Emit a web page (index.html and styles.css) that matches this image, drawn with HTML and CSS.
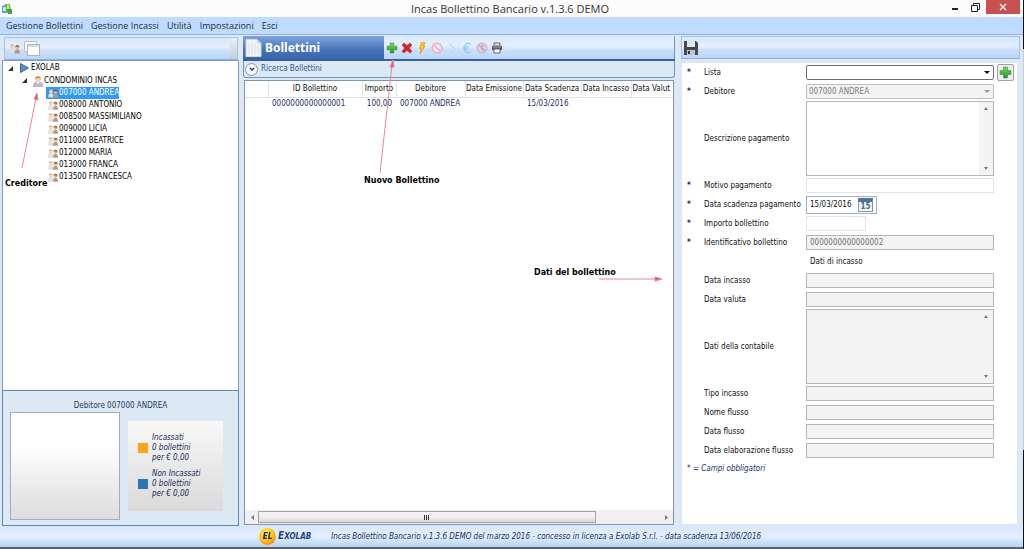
FILE: index.html
```html
<!DOCTYPE html>
<html lang="it">
<head>
<meta charset="utf-8">
<title>Incas Bollettino Bancario v.1.3.6 DEMO</title>
<link rel="stylesheet" href="styles.css">
</head>
<body>
<svg class="defs" width="0" height="0" aria-hidden="true">
  <defs>
    <linearGradient id="green" x1="0" y1="0" x2="0" y2="1"><stop offset="0" stop-color="#7ddb5c"/><stop offset="1" stop-color="#23922a"/></linearGradient>
    <symbol id="plus" viewBox="0 0 12 12"><path d="M4.2 1h3.6v3.2H11v3.6H7.800V11H4.200V7.800H1V4.200h3.200z" fill="url(#green)" stroke="#3c8f42" stroke-width=".6"/></symbol>
    <symbol id="people" viewBox="0 0 12 12"><path d="M1 10c0-3 1-4 2.800-4S6.500 7 6.500 10z" fill="#dfe6ee" stroke="#d3c6bb" stroke-width=".5"/><circle cx="3.700" cy="4" r="2" fill="#f6d5b6"/><path d="M1.600 3.600c0-3 4.200-3 4.300 0-1-1-3-1-4.300 0z" fill="#deb296"/><path d="M6 10.500c0-3 1-4 2.800-4s2.700 1 2.700 4z" fill="#b09a86"/><circle cx="8.800" cy="4.600" r="1.900" fill="#e9b68b"/><path d="M6.700 4.500c0-3.500 4.300-3.500 4.300 0-1-1.300-3-1.300-4.300 0z" fill="#7a5b48"/></symbol>
    <symbol id="person" viewBox="0 0 12 13"><path d="M.8 12.500c0-3.500 1.700-5 5.200-5s5.200 1.500 5.200 5z" fill="#c3b4d8" stroke="#9a82a8" stroke-width=".5"/><path d="M4.500 7.500 6 10l1.500-2.500z" fill="#fff"/><circle cx="6" cy="4.500" r="2.900" fill="#f8cf9d"/><path d="M2.800 5C2 0 10 0 9.200 5 8 3 5 2.600 2.800 5z" fill="#d18a32"/></symbol>
    <symbol id="tri" viewBox="0 0 5 5"><path d="M5 0v5H0z" fill="#333"/></symbol>
  </defs>
</svg>
<div class="window">
  <header class="titlebar">
    <svg class="app-icon" viewBox="0 0 12 12"><path d="M1 3 6 1v9L1 10z" fill="#5f9fc6"/><path d="M2 4h3v4H2z" fill="#c6e6f2"/><path d="M4 1h5l1 8-4 1z" fill="#73bf35"/><path d="M6 6h5v5H7z" fill="#4aa04a"/><path d="M6 2h2v4H6z" fill="#c4ef7c"/></svg>
    <h1 class="title">Incas Bollettino Bancario v.1.3.6 DEMO</h1>
    <div class="controls">
      <button type="button" aria-label="Riduci"><svg width="8" height="8"><path d="M1 5h6v2H1z" fill="#222"/></svg></button>
      <button type="button" aria-label="Ripristina"><svg width="9" height="9"><path d="M2.500 2.500v-2h6v6h-2M.5 2.500h6v6h-6z" fill="none" stroke="#222"/></svg></button>
      <button type="button" class="close" aria-label="Chiudi"><svg width="8" height="8"><path d="m1 1 6 6m0-6L1 7" stroke="#fff" stroke-width="1.300"/></svg></button>
    </div>
  </header>
  <nav class="menu">
    <button type="button">Gestione Bollettini</button>
    <button type="button">Gestione Incassi</button>
    <button type="button">Utilità</button>
    <button type="button">Impostazioni</button>
    <button type="button">Esci</button>
  </nav>
  <main class="workspace">
    <section class="left">
      <div class="toolbar">
        <button type="button" aria-label="Debitori"><svg width="13" height="12"><use href="#people"/></svg></button>
        <button type="button" aria-label="Finestre"><svg width="16" height="15" viewBox="0 0 16 15"><path d="M.5.500h12v10H.500z" fill="#fff" stroke="#b9c2cc"/><path d="M3.500 3.500h12v11h-12z" fill="#fff" stroke="#a9b4c0"/><path d="M4 4h11v2H4z" fill="#d6dde5"/></svg></button>
        <span class="grip"></span>
      </div>
      <div class="tree">
        <ul>
          <li><span class="node root"><svg width="5" height="5"><use href="#tri"/></svg><svg class="flag" width="9" height="10"><path d="M.5.500 8.500 5 .5 9.500z" fill="#5a8cc8" stroke="#3b6aa5"/></svg>EXOLAB</span></li>
          <li><span class="node group"><svg width="5" height="5"><use href="#tri"/></svg><svg class="head" width="12" height="12"><use href="#person"/></svg>CONDOMINIO INCAS</span>
            <ul class="leaves">
              <li><a href="#" class="node selected"><svg width="12" height="11"><use href="#people"/></svg>007000 ANDREA</a></li>
              <li><a href="#" class="node"><svg width="12" height="11"><use href="#people"/></svg>008000 ANTONIO</a></li>
              <li><a href="#" class="node"><svg width="12" height="11"><use href="#people"/></svg>008500 MASSIMILIANO</a></li>
              <li><a href="#" class="node"><svg width="12" height="11"><use href="#people"/></svg>009000 LICIA</a></li>
              <li><a href="#" class="node"><svg width="12" height="11"><use href="#people"/></svg>011000 BEATRICE</a></li>
              <li><a href="#" class="node"><svg width="12" height="11"><use href="#people"/></svg>012000 MARIA</a></li>
              <li><a href="#" class="node"><svg width="12" height="11"><use href="#people"/></svg>013000 FRANCA</a></li>
              <li><a href="#" class="node"><svg width="12" height="11"><use href="#people"/></svg>013500 FRANCESCA</a></li>
            </ul>
          </li>
        </ul>
      </div>
      <div class="debtor">
        <h2>Debitore 007000 ANDREA</h2>
        <div class="debtor-body">
          <div class="chart"></div>
          <div class="legend">
            <div class="entry"><span class="swatch orange"></span><p>Incassati<br>0 bollettini<br>per € 0,00</p></div>
            <div class="entry"><span class="swatch blue"></span><p>Non Incassati<br>0 bollettini<br>per € 0,00</p></div>
          </div>
        </div>
      </div>
    </section>

    <section class="center">
      <div class="list-head">
        <div class="list-title">
          <svg width="17" height="18" viewBox="0 0 17 18"><path d="M1 .5h11l4 4V17.500H1z" fill="#f3f4f6" stroke="#d3d8df"/><path d="M12 .5v4h4z" fill="#cdd5df"/><path d="M4 4v11M7 4v11M10 5v10M13 6v9" stroke="#d9dce1"/></svg>
          <h2>Bollettini</h2>
        </div>
        <div class="actions">
          <button type="button" aria-label="Nuovo"><svg width="12" height="12"><use href="#plus"/></svg></button>
          <button type="button" aria-label="Elimina"><svg width="12" height="12" viewBox="0 0 12 12"><path d="m1 3 2-2 3 2.500L9 1l2 2-2.500 3L11 9.500 9 11 6 8.500 3 11 1 9.500 3.500 6z" fill="#d6242b" stroke="#b9343a" stroke-width=".5"/></svg></button>
          <button type="button" aria-label="Genera"><svg width="12" height="12" viewBox="0 0 12 12"><path d="M5.500 0H9L7.500 4H9l-5 8 1.200-5.500H3.500z" fill="#f7c52c" stroke="#c98d1a" stroke-width=".6"/></svg></button>
          <button type="button" aria-label="Annulla" disabled><svg width="12" height="12" viewBox="0 0 12 12"><circle cx="6" cy="6" r="4.800" fill="#f3e6ef" stroke="#e6b3c2" stroke-width="1.500"/><path d="m3 3 6 6" stroke="#e6b3c2" stroke-width="1.500"/></svg></button>
          <button type="button" aria-label="Invia" disabled><svg width="12" height="12" viewBox="0 0 12 12"><path d="m3 2 6 4.500L3 11" fill="none" stroke="#c5d6ec" stroke-width="1.500"/></svg></button>
          <button type="button" aria-label="Incassa" disabled><svg width="12" height="12" viewBox="0 0 12 12"><path d="M9.500 2.500C6-.5 3.500 3 3.500 6s2.500 6.500 6 3.500M2 5h5.500M2 7h5" fill="none" stroke="#9bcdf0" stroke-width="1.500"/></svg></button>
          <button type="button" aria-label="Storna incasso" disabled><svg width="12" height="12" viewBox="0 0 12 12"><circle cx="6" cy="6" r="4.800" fill="#d9d2e8" stroke="#d9b6cd" stroke-width="1.500"/><path d="M8 4C5 2 4 8 8 8M3 3l6 6" fill="none" stroke="#bfa6c8" stroke-width="1.200"/></svg></button>
          <button type="button" aria-label="Stampa"><svg width="12" height="12" viewBox="0 0 12 12"><path d="M3 1h6v3H3z" fill="#e8e8e8" stroke="#666"/><path d="M1 4h10v4H1z" fill="#5a5a5a"/><path d="M3 7h6v4H3z" fill="#fff" stroke="#666"/><path d="M2 5h8" stroke="#aaa"/></svg></button>
        </div>
      </div>
      <div class="search">
        <button type="button"><span class="round"><svg width="6" height="5"><path d="m1 1 2 2 2-2" fill="none" stroke="#333" stroke-width="1.300"/></svg></span>Ricerca Bollettini</button>
      </div>
      <div class="grid-panel">
        <div class="grid-clip">
          <table>
            <colgroup><col class="c-head"><col class="c-id"><col class="c-amount"><col class="c-debtor"><col class="c-date"><col class="c-date"><col class="c-paid"><col class="c-value"></colgroup>
            <thead><tr><th></th><th>ID Bollettino</th><th>Importo</th><th>Debitore</th><th>Data Emissione</th><th>Data Scadenza</th><th>Data Incasso</th><th class="cut">Data Valut</th></tr></thead>
            <tbody><tr><td></td><td>0000000000000001</td><td class="num">100,00</td><td>007000 ANDREA</td><td></td><td>15/03/2016</td><td></td><td></td></tr></tbody>
          </table>
        </div>
        <div class="hscroll">
          <button type="button" aria-label="Scorri a sinistra"><svg width="4" height="5"><path d="M4 0v5L1 2.500z" fill="#777"/></svg></button>
          <div class="track"><div class="thumb"><svg width="6" height="5"><path d="M.5 0v5m2-5v5m2-5v5" stroke="#333"/></svg></div></div>
          <button type="button" aria-label="Scorri a destra"><svg width="4" height="5"><path d="M0 0v5l3-2.500z" fill="#777"/></svg></button>
        </div>
      </div>
    </section>

    <section class="right">
      <div class="toolbar save">
        <button type="button" aria-label="Salva"><svg width="14" height="14" viewBox="0 0 14 14"><path d="M0 0h12l2 2v12H0z" fill="#454a52"/><path d="M3 0h8v6H3z" fill="#dfe6ee"/><path d="M3 9h8v5H3z" fill="#bfc5cc"/><path d="M4 10h2v3H4z" fill="#333"/></svg></button>
      </div>
      <form class="form">
        <div class="row"><span class="req">*</span><label for="lista">Lista</label><span class="pick"><select id="lista"><option></option></select></span><button type="button" class="add" aria-label="Aggiungi lista"><svg width="13" height="13"><use href="#plus"/></svg></button></div>
        <div class="row"><span class="req">*</span><label for="deb">Debitore</label><span class="pick off"><select id="deb" disabled><option>007000 ANDREA</option></select></span></div>
        <div class="row tall"><span></span><label for="descr">Descrizione pagamento</label><div class="area"><textarea id="descr"></textarea><div class="vscroll"><i class="up"></i><i class="down"></i></div></div></div>
        <div class="row"><span class="req">*</span><label for="motivo">Motivo pagamento</label><input type="text" id="motivo" class="light"></div>
        <div class="row"><span class="req">*</span><label for="scad">Data scadenza pagamento</label><div class="date"><input type="text" id="scad" value="15/03/2016"><button type="button" aria-label="Calendario">15</button></div></div>
        <div class="row"><span class="req">*</span><label for="imp">Importo bollettino</label><input type="text" id="imp" class="light short"></div>
        <div class="row"><span class="req">*</span><label for="ident">Identificativo bollettino</label><input type="text" id="ident" value="0000000000000002" disabled></div>
        <div class="row"><h3>Dati di incasso</h3></div>
        <div class="row"><span></span><label for="dinc">Data incasso</label><input type="text" id="dinc" disabled></div>
        <div class="row"><span></span><label for="dval">Data valuta</label><input type="text" id="dval" disabled></div>
        <div class="row tall"><span></span><label for="cont">Dati della contabile</label><div class="area off"><textarea id="cont" disabled></textarea><div class="vscroll"><i class="up"></i><i class="down"></i></div></div></div>
        <div class="row"><span></span><label for="tipo">Tipo incasso</label><input type="text" id="tipo" disabled></div>
        <div class="row"><span></span><label for="nome">Nome flusso</label><input type="text" id="nome" disabled></div>
        <div class="row"><span></span><label for="dflu">Data flusso</label><input type="text" id="dflu" disabled></div>
        <div class="row"><span></span><label for="dela">Data elaborazione flusso</label><input type="text" id="dela" disabled></div>
        <p class="note">* = Campi obbligatori</p>
      </form>
    </section>
  </main>
  <footer class="status">
    <div class="brand"><span class="ball">EL</span><span class="brand-name">E<small>XOLAB</small></span></div>
    <p>Incas Bollettino Bancario v.1.3.6 DEMO del marzo 2016 - concesso in licenza a Exolab S.r.l. - data scadenza 13/06/2016</p>
  </footer>

  <div class="notes">
    <svg width="100%" height="100%">
      <g fill="#e0566a" stroke="#e58a96">
        <path d="M22 168 36 98"/><path d="m37 93 1 7-4-1z"/>
        <path d="m380 173 12-108"/><path d="m393 60 1 7h-4z"/>
        <path d="M599 279h58"/><path d="m662 279-7-2v4z"/>
      </g>
    </svg>
    <span class="tag creditor">Creditore</span>
    <span class="tag new-slip">Nuovo Bollettino</span>
    <span class="tag slip-data">Dati del bollettino</span>
  </div>
</div>
</body>
</html>
```
FILE: styles.css
```css
* { box-sizing: border-box; }
body {
  margin: 0;
  padding-right: 1px;
  background: linear-gradient(#111 9%, #c3ccd8 9%, #c3ccd8 82%, #111 82%);
  font: 8px/12px "DejaVu Sans Condensed", "Noto Sans", sans-serif;
  color: #111;
}
h1, h2, h3, p, ul { margin: 0; padding: 0; font-size: inherit; font-weight: normal; }
ul { list-style: none; }
button, input, select, textarea { font: inherit; color: inherit; margin: 0; padding: 0; }
button { border: 0; background: none; display: flex; align-items: center; justify-content: center; }
svg { display: block; flex: none; }
.defs { position: absolute; }

.window {
  position: relative;
  min-height: 100vh;
  display: flex;
  flex-direction: column;
  background: #dde8f5;
  border-bottom: 2px solid #5d5f66;
}

.titlebar {
  display: grid;
  grid-template-columns: 1fr auto 1fr;
  height: 17px;
  padding-right: 3px;
  background: #fcfcfc;
}
.app-icon { width: 12px; height: 12px; margin: 3px 0 0 1px; }
.title { font: 11px/17px "Open Sans", "Noto Sans", sans-serif; color: #333; }
.controls { display: flex; justify-content: flex-end; align-items: flex-start; }
.controls button { width: 20px; height: 14px; }
.controls .close { width: 34px; margin-left: 1px; background: #c75050; }

.menu {
  display: flex;
  gap: 8px;
  height: 18px;
  padding: 0 6px;
  background: #bfdbff;
  border-bottom: 1px solid #8db2e3;
}
.menu button { font: 9px/17px "Open Sans", "Noto Sans", sans-serif; color: #1c2c44; }

.workspace {
  flex: 1;
  display: grid;
  grid-template-columns: 237fr 432fr 341fr;
  gap: 4px;
  padding: 1px 3px 0 2px;
}
.left, .center, .right { display: flex; flex-direction: column; min-width: 0; }
.right { padding-left: 2px; }

.toolbar {
  display: flex;
  align-items: center;
  gap: 3px;
  height: 23px;
  padding-left: 3px;
  background: linear-gradient(#d6e7fb, #e3effd 45%, #cadffa 60%, #bdd7f8);
  border: 1px solid #a5c3e8;
  border-bottom-color: #8bb0dc;
}
.left .toolbar { margin: 1px 1px 0 2px; }
.grip { align-self: stretch; width: 7px; margin-left: auto; background: linear-gradient(#e9eef5, #c4cdd9); }

.tree {
  flex: 1;
  padding: 1px 0 0 5px;
  background: #fff;
  border: 1px solid #7d9cc0;
  border-bottom: 0;
}
.node { display: inline-flex; align-items: center; height: 12px; color: #000; text-decoration: none; white-space: nowrap; }
.root .flag { margin: 0 2px 0 7px; }
.group { padding-left: 14px; }
.group .head { margin: 0 0 0 5px; }
.leaves { padding-left: 38px; }
.leaves li { display: flex; height: 12px; }
.leaves .node { padding-left: 1px; }
.leaves .selected { background: #3399f5; color: #fff; }

.debtor {
  height: 136px;
  padding: 8px 15px 8px 7px;
  background: #dde8f5;
  border: 1px solid #5f87b3;
}
.debtor h2 { text-align: center; padding-left: 8px; line-height: 13px; color: #1f3864; }
.debtor-body { display: grid; grid-template-columns: 110fr 95fr; gap: 8px; align-items: center; }
.chart { height: 108px; background: linear-gradient(#fff 30%, #dcdcdc); border: 1px solid #a5adb8; }
.legend {
  display: flex;
  flex-direction: column;
  justify-content: center;
  gap: 6px;
  height: 90px;
  padding-left: 10px;
  background: linear-gradient(#f8f8f8, #dadada);
}
.entry { display: flex; align-items: center; gap: 4px; }
.entry p { line-height: 10px; font-style: italic; color: #1b2a5c; white-space: nowrap; }
.swatch { width: 10px; height: 10px; }
.orange { background: #faa51a; }
.blue { background: #2e75b6; }

.list-head {
  display: flex;
  height: 25px;
  background: linear-gradient(#7fa5dc, #4673b8 60%, #3a64aa);
  border-bottom: 2px solid #35609f;
}
.list-title { flex: 141; display: flex; align-items: center; gap: 3px; padding-left: 2px; }
.list-title h2 { font: bold 12px/18px "Noto Sans", sans-serif; color: #fff; }
.actions {
  flex: 291;
  display: flex;
  align-items: center;
  gap: 3px;
  padding-left: 2px;
  background: linear-gradient(#dbeafc, #e3effd 45%, #cadffa 60%, #bdd5f6);
  border-right: 1px solid #6f96c8;
}

.search { height: 17px; padding-left: 1px; background: #dde8f5; border: 1px solid #6f96c8; border-top: 0; border-radius: 0 0 3px 3px; }
.search button { gap: 3px; height: 16px; color: #2a5a96; }
.round {
  display: flex;
  align-items: center;
  justify-content: center;
  width: 13px;
  height: 13px;
  background: #f2f5f9;
  border: 1px solid #8b99aa;
  border-radius: 50%;
}

.grid-panel {
  flex: 1;
  display: flex;
  flex-direction: column;
  margin: 2px 1px 1px;
  background: #fff;
  border: 1px solid #7f93ab;
}
.grid-clip { flex: 1; overflow: hidden; }
table { width: 462px; table-layout: fixed; border-collapse: collapse; }
.c-head { width: 23px; }
.c-id { width: 94px; }
.c-amount { width: 34px; }
.c-debtor { width: 69px; }
.c-date { width: 58px; }
.c-paid { width: 50px; }
.c-value { width: 76px; }
th { height: 16px; padding: 0; font-weight: normal; white-space: nowrap; border-right: 1px solid #e3e5e8; border-bottom: 1px solid #dcdfe3; }
th.cut { text-align: left; padding-left: 1px; }
td { height: 14px; padding: 0 4px; white-space: nowrap; color: #1b2a6b; }
.num { text-align: right; }

.hscroll { display: flex; height: 14px; background: #f0f0f0; }
.hscroll > button { width: 13px; }
.track { flex: 1; padding: 1px 0; }
.thumb {
  display: flex;
  align-items: center;
  justify-content: center;
  width: 84%;
  height: 12px;
  background: linear-gradient(#f2f2f2 45%, #d8d8d8);
  border: 1px solid #a2a2a2;
}

.save { padding-left: 2px; }
.form { flex: 1; margin: 4px 3px 2px 1px; padding: 0 3px 0 5px; background: #fff; }
.row {
  display: grid;
  grid-template-columns: 15px 100px minmax(0, 187fr) 17px;
  column-gap: 2px;
  align-items: center;
  height: 19px;
}
.row > input, .row > .pick, .row > .area, .row > .date { margin-right: 1px; }
.tall { height: 75px; }
.row label { white-space: nowrap; }
.req { color: #1b2a6b; font-style: italic; font-weight: bold; }
.row h3 { grid-column: 3; padding-left: 4px; }
.row input { height: 15px; min-width: 0; padding: 0 3px; background: #fff; border: 1px solid #b5b5b5; }
.row input:disabled { background: #f3f3f3; color: #6e6e6e; }
.row .light { border-color: #e2e2e2; }
.row .short { width: 60px; }

.pick { position: relative; display: block; height: 15px; }
.pick select {
  display: block;
  appearance: none;
  width: 100%;
  height: 15px;
  padding: 0 2px;
  background: #fff;
  border: 1px solid #707070;
  border-radius: 2px;
  opacity: 1;
}
.pick::after {
  content: "";
  position: absolute;
  right: 4px;
  top: 6px;
  border: 3px solid transparent;
  border-top-color: #111;
  border-bottom: 0;
}
.pick.off select { background: #f3f3f3; border-color: #bdbdbd; color: #7a7a7a; }
.pick.off::after { border-top-color: #999; }
.add { width: 17px; height: 17px; background: #eee; border: 1px solid #a0a0a0; border-radius: 2px; }

.area { display: flex; height: 75px; background: #fff; border: 1px solid #b5b5b5; }
.area textarea { flex: 1; min-width: 0; border: 0; background: none; resize: none; overflow: hidden; }
.vscroll { display: flex; flex-direction: column; justify-content: space-between; align-items: center; width: 14px; padding: 5px 0; background: #f3f3f3; }
.area.off { background: #f3f3f3; }
.up, .down { border: 2px solid transparent; }
.up { border-bottom: 3px solid #777; border-top: 0; }
.down { border-top: 3px solid #777; border-bottom: 0; }

.date { display: flex; align-items: center; width: 71px; height: 18px; border: 1px solid #9db2c8; }
.date input { width: 51px; height: 16px; border: 0; }
.date button {
  width: 15px;
  height: 14px;
  padding-top: 1px;
  font-weight: bold;
  line-height: 9px;
  color: #3f6a88;
  background: #f4f7fa;
  border: 1px solid #7f98ab;
  border-top: 4px solid #4f7590;
}
.note { padding-top: 2px; line-height: 14px; font-style: italic; color: #1b2a6b; }

.status {
  display: flex;
  align-items: center;
  gap: 20px;
  height: 21px;
  padding-left: 259px;
  background: linear-gradient(#d6e7fb, #e3effd 50%, #b5d2f6);
  color: #1b2a6b;
  font-style: italic;
}
.status p { white-space: nowrap; }
.brand { display: flex; align-items: center; gap: 2px; font-weight: bold; }
.ball {
  width: 17px;
  height: 17px;
  border-radius: 50%;
  background: radial-gradient(circle at 40% 30%, #fff23a, #ffb91c 55%, #ee4e12);
  text-align: center;
  line-height: 17px;
  color: #1b2060;
}
.brand-name { font-size: 10px; color: #1f3f8f; }
.brand-name small { font-size: 8px; }

.notes { position: absolute; inset: 0; pointer-events: none; }
.tag { position: absolute; font: bold 8px/12px "DejaVu Sans", sans-serif; color: #000; white-space: nowrap; }
.creditor { left: 5px; top: 178px; }
.new-slip { left: 364px; top: 175px; }
.slip-data { left: 534px; top: 267px; }
```
